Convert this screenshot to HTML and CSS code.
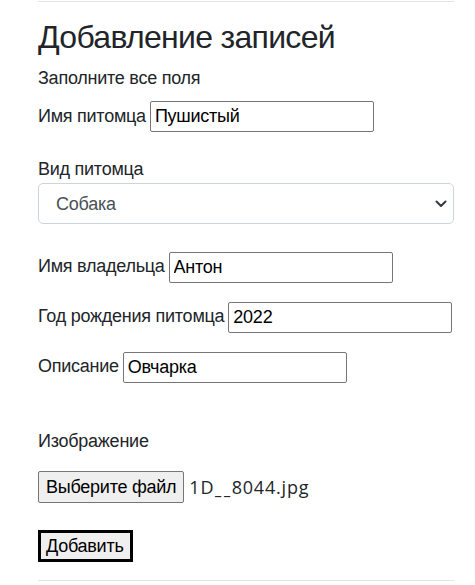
FILE: index.html
```html
<!DOCTYPE html>
<html lang="ru">
<head>
<meta charset="utf-8">
<title>Добавление записей</title>
<link rel="stylesheet" href="styles.css">
</head>
<body>
<div class="container">
  <hr class="rule top">
  <h1 class="title">Добавление записей</h1>
  <p class="intro">Заполните все поля</p>
  <form class="form">
    <div class="row row-first">
      <label class="lbl" for="pet">Имя питомца</label>
      <input class="field" id="pet" type="text" value="Пушистый">
    </div>
    <div class="stack">
      <div class="lbl">Вид питомца</div>
      <div class="select">
        <span class="select-text">Собака</span>
        <svg class="chev" width="12" height="8" viewBox="0 0 12 8"><path d="M1.5 1.5 6 6l4.5-4.5" fill="none" stroke="#343a40" stroke-width="2" stroke-linecap="round" stroke-linejoin="round"/></svg>
      </div>
    </div>
    <div class="row row-owner">
      <label class="lbl" for="owner">Имя владельца</label>
      <input class="field" id="owner" type="text" value="Антон">
    </div>
    <div class="row row-next">
      <label class="lbl" for="year">Год рождения питомца</label>
      <input class="field" id="year" type="text" value="2022">
    </div>
    <div class="row row-next">
      <label class="lbl" for="desc">Описание</label>
      <input class="field" id="desc" type="text" value="Овчарка">
    </div>
    <div class="lbl img-label">Изображение</div>
    <div class="file">
      <span class="file-btn">Выберите файл</span>
      <span class="file-name">1D<span class="us">_</span><span class="us">_</span>8044.jpg</span>
    </div>
    <div class="submit-wrap">
      <span class="submit">Добавить</span>
    </div>
  </form>
  <hr class="rule bottom">
</div>
</body>
</html>
```

FILE: styles.css
```css
html, body {
  margin: 0;
  padding: 0;
  background: #fff;
}
body {
  font-family: "Liberation Sans", Arial, sans-serif;
  font-size: 18px;
  line-height: 1.2;
  letter-spacing: -0.25px;
  color: #212529;
}
.container {
  width: 416px;
  margin-left: 38px;
}
.rule {
  border: 0;
  border-top: 1px solid #e4e4e4;
  margin: 0;
  height: 0;
}
.rule.top {
  margin-top: 1px;
}
.rule.bottom {
  margin-top: 18px;
}
.title {
  font-size: 32px;
  font-weight: 400;
  line-height: 1.2;
  letter-spacing: -0.7px;
  margin: 16px 0 12px;
}
.intro {
  margin: 0 0 11px;
}
.form {
  margin: 0;
}
.row {
  display: flex;
  align-items: center;
  gap: 4px;
}
.row-owner {
  margin-top: 28px;
}
.row-next {
  margin-top: 19px;
}
.lbl {
  display: block;
  white-space: nowrap;
}
.field {
  box-sizing: border-box;
  width: 224px;
  height: 31px;
  padding: 1px 4px 0;
  border: 1px solid #767676;
  border-radius: 2px;
  font-family: "Liberation Sans", Arial, sans-serif;
  font-size: 18px;
  letter-spacing: -0.25px;
  color: #000;
  background: #fff;
  outline: none;
}
.stack {
  margin-top: 27px;
  display: flex;
  flex-direction: column;
  gap: 2px;
}
.select {
  box-sizing: border-box;
  height: 41px;
  border: 1px solid #ced4da;
  border-radius: 5px;
  display: flex;
  align-items: center;
  justify-content: space-between;
  padding: 3px 6px 0 17px;
  color: #495057;
}
.chev {
  display: block;
  margin-top: -2px;
}
.img-label {
  margin-top: 48px;
}
.file {
  margin-top: 19px;
  display: flex;
  align-items: center;
  gap: 5px;
}
.file-btn {
  box-sizing: border-box;
  height: 32px;
  display: flex;
  align-items: center;
  padding: 2px 7px 0;
  border: 1px solid #767676;
  border-radius: 2px;
  background: #efefef;
  color: #000;
}
.file-name {
  font-family: "Open Sans", "Liberation Sans", sans-serif;
  font-size: 18px;
  letter-spacing: 0.8px;
  color: #212529;
  padding-top: 2px;
}
.us {
  display: inline-block;
  transform: scaleX(0.78);
}
.submit-wrap {
  margin-top: 27px;
  display: flex;
}
.submit {
  box-sizing: border-box;
  height: 32px;
  display: flex;
  align-items: center;
  padding: 2px 6px 0 5px;
  border: 3px solid #000;
  background: #efefef;
  color: #000;
}
```
